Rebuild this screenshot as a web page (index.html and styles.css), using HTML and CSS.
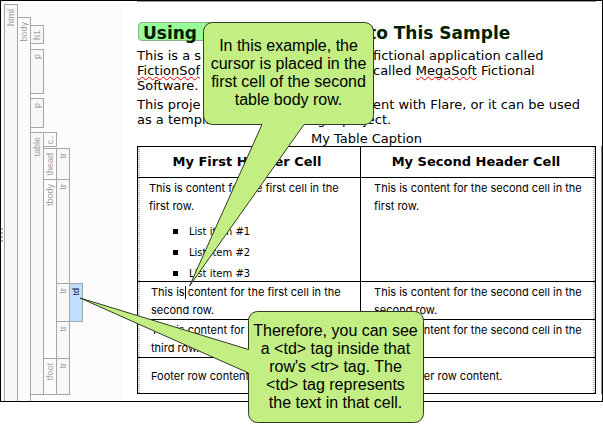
FILE: index.html
```html
<!DOCTYPE html>
<html lang="en">
<head>
<meta charset="utf-8">
<title>Using This Sample</title>
<link rel="stylesheet" href="styles.css">
</head>
<body>
<div class="editor">
  <nav class="structure" aria-label="Document structure">
    <div class="grip"><i></i><i></i><i></i><i></i></div>
    <div class="tree">
      <div class="tag tag-html"><span>html</span></div>
      <div class="tag tag-body"><span>body</span></div>
      <div class="tag tag-h1"><span>h1</span></div>
      <div class="tag tag-p1"><span>p</span></div>
      <div class="tag tag-p2"><span>p</span></div>
      <div class="tag tag-table"><span>table</span></div>
      <div class="tag tag-caption"><span>c..</span></div>
      <div class="tag tag-thead"><span>thead</span></div>
      <div class="tag tag-tbody"><span>tbody</span></div>
      <div class="tag tag-tfoot"><span>tfoot</span></div>
      <div class="tag tag-tr1"><span>tr</span></div>
      <div class="tag tag-tr2"><span>tr</span></div>
      <div class="tag tag-tr3"><span>tr</span></div>
      <div class="tag tag-tr4"><span>tr</span></div>
      <div class="tag tag-tr5"><span>tr</span></div>
      <div class="tag tag-td"><span>td</span></div>
    </div>
  </nav>
  <main class="page">
    <h1 class="split"><span class="pill">Using</span><span class="rest">to This Sample</span></h1>
    <p>
      <span class="split"><span>This is a s</span><span>fictional application called</span></span>
      <span class="split"><span class="misspelt">FictionSof</span><span>called <span class="misspelt">MegaSoft</span> Fictional</span></span>
      <span class="split"><span>Software.</span></span>
    </p>
    <p>
      <span class="split"><span>This proje</span><span>ent with Flare, or it can be used</span></span>
      <span class="split split-early"><span>as a templa</span><span>beginning a project.</span></span>
    </p>
    <table>
      <caption>My Table Caption</caption>
      <colgroup><col class="col-first"><col></colgroup>
      <thead>
        <tr><th>My First Header Cell</th><th>My Second Header Cell</th></tr>
      </thead>
      <tbody>
        <tr class="tall">
          <td>This is content for the first cell in the<br>first row.
            <ul><li>List item #1</li><li>List item #2</li><li>List item #3</li></ul>
          </td>
          <td>This is content for the second cell in the<br>first row.</td>
        </tr>
        <tr><td>This is<span class="caret"></span> content for the first cell in the<br>second row.</td><td>This is content for the second cell in the<br>second row.</td></tr>
        <tr><td>This is content for the first cell in the<br>third row.</td><td>This is content for the second cell in the<br>third row.</td></tr>
      </tbody>
      <tfoot>
        <tr><td>Footer row content.</td><td>Footer row content.</td></tr>
      </tfoot>
    </table>
  </main>
</div>
<svg class="balloons" width="603" height="432" viewBox="0 0 603 432" aria-hidden="true">
  <path d="M212.500 22.500H364.500A9 9 0 0 1 373.500 31.500V115.500A9 9 0 0 1 364.500 124.500H304L189.500 286L262 124.500H212.500A9 9 0 0 1 203.500 115.500V31.500A9 9 0 0 1 212.500 22.500Z"/>
  <path d="M257.500 311.500H414.500A9 9 0 0 1 423.500 320.500V413.500A9 9 0 0 1 414.500 422.500H257.500A9 9 0 0 1 248.500 413.500V373L80 298L248.500 349.500V320.500A9 9 0 0 1 257.500 311.500Z"/>
</svg>
<aside class="note note-cursor">In this example, the<br>cursor is placed in the<br>first cell of the second<br>table body row.</aside>
<aside class="note note-tag">Therefore, you can see<br>a &lt;td&gt; tag inside that<br>row's &lt;tr&gt; tag. The<br>&lt;td&gt; tag represents<br>the text in that cell.</aside>
</body>
</html>
```
FILE: styles.css
```css
* { box-sizing: border-box; }
body {
  margin: 0;
  min-height: 100vh;
  position: relative;
  background: #fff;
  color: #000;
  font: 13px/15px "DejaVu Sans", Verdana, sans-serif;
}
.editor {
  display: grid;
  grid-template-columns: 121px 1fr;
  border: 1px solid #000;
  background: linear-gradient(#888, #888) right bottom 7px / 1px 62% no-repeat;
}
.structure {
  display: flex;
  background: #fcfcfc;
}
.grip {
  width: 3px;
  display: flex;
  flex-direction: column;
  justify-content: center;
  gap: 2px;
  padding-top: 68px;
}
.grip i { width: 2px; height: 2px; background: #b4b4b4; }
.tree {
  display: grid;
  grid-template-columns: repeat(6, 13px);
  grid-template-rows: 13px 8px 18px 6px 44px 5px 29px 5px 14px 2px 31px 104px 38px 37px 36px 7px;
  padding-top: 3px;
}
.tag {
  display: flex;
  justify-content: center;
  margin: 0 -1px -1px 0;
  padding-top: 4px;
  border: 1px solid #a6a6a6;
  background: #f7f7f7;
  color: #a0a0a0;
  font: 9px/11px "Liberation Sans", Arial, sans-serif;
  overflow: hidden;
}
.tag span {
  writing-mode: vertical-rl;
  transform: rotate(180deg);
  align-self: flex-start;
}
.tag-html { grid-area: 1 / 1 / 17 / 2; border-bottom: 0; margin-bottom: 0; }
.tag-body { grid-area: 2 / 2 / 17 / 3; border-bottom: 0; margin-bottom: 0; background: #fcfcfc; }
.tag-h1 { grid-area: 3 / 3 / 4 / 4; }
.tag-p1 { grid-area: 5 / 3 / 6 / 4; }
.tag-p2 { grid-area: 7 / 3 / 8 / 4; }
.tag-table { grid-area: 9 / 3 / 16 / 4; }
.tag-caption { grid-area: 9 / 4 / 10 / 5; padding-top: 2px; background: #fcfcfc; }
.tag-thead { grid-area: 11 / 4 / 12 / 5; background: #fcfcfc; }
.tag-tbody { grid-area: 12 / 4 / 15 / 5; background: #fcfcfc; }
.tag-tfoot { grid-area: 15 / 4 / 16 / 5; background: #fcfcfc; }
.tag-tr1 { grid-area: 11 / 5 / 12 / 6; }
.tag-tr2 { grid-area: 12 / 5 / 13 / 6; }
.tag-tr3 { grid-area: 13 / 5 / 14 / 6; }
.tag-tr4 { grid-area: 14 / 5 / 15 / 6; }
.tag-tr5 { grid-area: 15 / 5 / 16 / 6; }
.tag-td { grid-area: 13 / 6 / 14 / 7; background: #bfdfff; color: #223; }

.page {
  margin: 0 6px 0 15px;
  border-top: 1px solid #999;
}
.split {
  display: grid;
  grid-template-columns: 236px 1fr;
  white-space: nowrap;
}
.split-early { grid-template-columns: 124px 1fr; }
h1 {
  margin: 20px 0 3px;
  font-size: 17px;
  line-height: 23px;
  color: #001e00;
}
h1.split { grid-template-columns: 231px 1fr; }
.pill {
  height: 19px;
  margin: 0 24px 0 1px;
  padding-left: 4px;
  border: 1px solid #8fae8f;
  border-radius: 4px;
  background: #98fb98;
  line-height: 21px;
}
p { margin: 0 0 4px; }
.misspelt { text-decoration: underline wavy #e00000 1px; text-decoration-skip-ink: none; }

table {
  width: 100%;
  table-layout: fixed;
  border-collapse: collapse;
  border: 1px solid #000;
  font-size: 11px;
  line-height: 18px;
}
.col-first { width: 48.7%; }
caption { font-size: 13px; line-height: 15px; }
th, td { border: 1px solid #000; padding: 0 0 0 13px; }
tr > :first-child { background: repeating-linear-gradient(#bbb 0 1px, #fff 1px 2px) left / 2px 100% no-repeat; }
tr > :last-child { background: repeating-linear-gradient(#bbb 0 1px, #fff 1px 2px) right / 2px 100% no-repeat; }
th { height: 31px; padding: 0 4px 0 0; font-size: 13px; }
td { height: 38px; vertical-align: top; padding-top: 1px; font-family: Inter, "DejaVu Sans", sans-serif; white-space: nowrap; }
.tall td { height: 104px; }
.tall td:first-child { padding-left: 11px; }
tfoot td { height: 36px; vertical-align: middle; }
tfoot td:last-child { padding-left: 40px; }
ul { list-style: none; margin: 6px 0 -3px; padding: 0 0 0 24px; font: 10px/21px "DejaVu Sans", Verdana, sans-serif; }
li { display: flex; align-items: center; gap: 11px; }
li::before { content: ""; width: 5px; height: 5px; background: #000; }
.caret { display: inline-block; width: 1px; height: 13px; margin-right: -1px; background: #000; vertical-align: -3px; }

.balloons { position: absolute; left: 0; top: 0; }
.balloons path { fill: #c2ee84; stroke: #303c24; stroke-width: 1; }
.note {
  position: absolute;
  font: 16px/18px "Liberation Sans", Arial, sans-serif;
  text-align: center;
  white-space: nowrap;
}
.note-cursor { left: 203px; top: 37px; width: 171px; }
.note-tag { left: 248px; top: 322px; width: 175px; }
```
